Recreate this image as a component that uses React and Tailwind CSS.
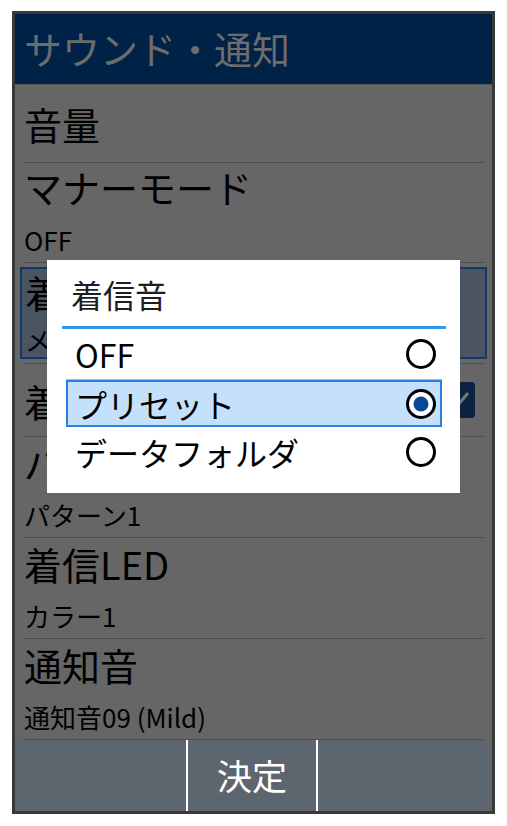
const font = { fontFamily: '"Noto Sans CJK JP", "Noto Sans", sans-serif' }

const Sep = () => <div className="mx-[8px] h-px bg-[#4f4f4f]" />

const Radio = ({ on }) => (
  <svg width="32" height="32" viewBox="0 0 32 32" className="shrink-0">
    <circle cx="16" cy="16" r="13.5" fill="white" stroke="black" strokeWidth="3" />
    {on && <circle cx="16" cy="16" r="7.5" fill="#0a4596" />}
  </svg>
)

const TwoLine = ({ title, sub }) => (
  <div className="h-[100px] flex flex-col justify-between pt-[2px] pb-[4px] pl-[9px] text-black">
    <div className="text-[38px] leading-[48px]">{title}</div>
    <div className="text-[26px] leading-[36px]">{sub}</div>
  </div>
)

export default function App() {
  return (
    <div className="min-h-screen bg-white pt-[11px] pl-[12px]" style={font}>
      <div className="relative w-[483px] h-[803px] border-[3px] border-[#393939] bg-[#666666] flex flex-col">
        <div className="h-[71px] bg-[#012247] flex items-center pl-[9px] pb-[4px] text-[38px] text-[#6c6c6c] border-b border-[#555]">
          サウンド・通知
        </div>

        <div className="h-[77px] flex items-center pl-[9px] text-[38px] text-black">音量</div>
        <Sep />
        <div className="h-[99px] flex flex-col justify-between pt-[0px] pb-[4px] pl-[9px] text-black">
          <div className="text-[38px] leading-[48px]">マナーモード</div>
          <div className="text-[26px] leading-[36px]">OFF</div>
        </div>
        <Sep />
        <div className="h-[100px] px-[5px] py-[4px]">
          <div className="h-full border-2 border-[#10386f] bg-[#4b5561] flex flex-col justify-between pl-[3px] text-black">
            <div className="text-[38px] leading-[46px]">着信音</div>
            <div className="text-[26px] leading-[34px]">メロディ1</div>
          </div>
        </div>
        <Sep />
        <div className="h-[72px] flex items-center justify-between pl-[9px] pr-[17px] text-black">
          <span className="text-[38px]">着信バイブ</span>
          <div className="w-[30px] h-[36px] rounded-[4px] bg-[#0b2241] flex items-center justify-center">
            <svg width="22" height="22" viewBox="0 0 22 22">
              <path d="M3 12l5 5L19 4" fill="none" stroke="#777" strokeWidth="3" />
            </svg>
          </div>
        </div>
        <Sep />
        <TwoLine title="バイブ" sub="パターン1" />
        <Sep />
        <TwoLine title="着信LED" sub="カラー1" />
        <Sep />
        <TwoLine title="通知音" sub="通知音09 (Mild)" />
        <Sep />
        <div className="flex-1 bg-[#5d666e] flex">
          <div className="w-[173px] border-r-2 border-white" />
          <div className="w-[130px] border-r-2 border-white flex items-center justify-center text-white text-[35px]">
            決定
          </div>
          <div className="flex-1" />
        </div>

        <div className="absolute left-[32px] top-[246px] w-[413px] h-[233px] bg-white flex flex-col">
          <div className="h-[66px] flex items-center pl-[24px] pt-[2px] text-[32px] text-[#1e1e1e]">着信音</div>
          <div className="mx-[15px] mr-[14px] h-[3px] bg-[#3097ec]" />
          <div className="h-[50px] flex items-center justify-between pl-[28px] pr-[23px] text-[32px] text-black">
            <span>OFF</span>
            <Radio />
          </div>
          <div className="mx-[19px] mr-[18px] border-t border-[#bdbdbd]">
            <div className="h-[47px] border-2 border-[#2a80e2] bg-[#c4e0fb] flex items-center justify-between pl-[7px] pr-[3px] text-[32px] text-black">
              <span>プリセット</span>
              <Radio on />
            </div>
          </div>
          <div className="h-[50px] flex items-center justify-between pl-[28px] pr-[23px] text-[32px] text-black">
            <span>データフォルダ</span>
            <Radio />
          </div>
        </div>
      </div>
    </div>
  )
}
